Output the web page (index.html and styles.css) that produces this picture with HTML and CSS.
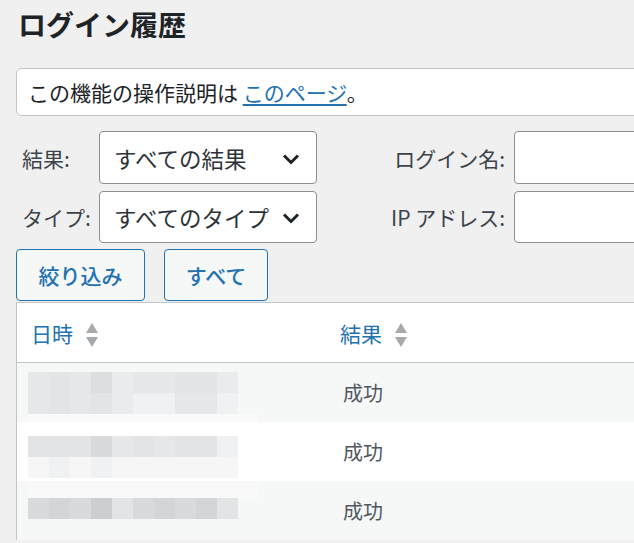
FILE: index.html
```html
<!DOCTYPE html>
<html lang="ja">
<head>
  <meta charset="UTF-8" />
  <title>ログイン履歴</title>
  <link rel="stylesheet" href="styles.css">
</head>
<body>
  <div class="wrap">
    <h1 class="page-title">ログイン履歴</h1>

    <div class="notice">
      この機能の操作説明は <a href="#">このページ</a>。
    </div>

    <form class="filters">
      <label class="lbl">結果:</label>
      <div class="select">
        <span>すべての結果</span>
        <svg class="chev" width="18" height="12" viewBox="0 0 18 12"><path d="M2 2.5l7 7 7-7" fill="none" stroke="#1d2327" stroke-width="3"/></svg>
      </div>
      <label class="lbl right">ログイン名:</label>
      <div class="input"></div>

      <label class="lbl">タイプ:</label>
      <div class="select">
        <span>すべてのタイプ</span>
        <svg class="chev" width="18" height="12" viewBox="0 0 18 12"><path d="M2 2.5l7 7 7-7" fill="none" stroke="#1d2327" stroke-width="3"/></svg>
      </div>
      <label class="lbl right">IP アドレス:</label>
      <div class="input"></div>
    </form>

    <div class="actions">
      <button class="btn">絞り込み</button>
      <button class="btn btn-all">すべて</button>
    </div>

    <table class="log-table">
      <thead>
        <tr>
          <th class="col-date"><a href="#">日時</a><span class="sort"></span></th>
          <th class="col-result"><a href="#">結果</a><span class="sort"></span></th>
        </tr>
      </thead>
      <tbody>
        <tr class="alt">
          <td class="col-date">
            <div class="blur first">
              <div class="blocks">
                <i class="g3"></i><i class="g4"></i><i class="g3"></i><i class="g5"></i><i class="g2"></i><i class="g3"></i><i class="g3"></i><i class="g4"></i><i class="g4"></i><i class="g2"></i>
                <i class="g3"></i><i class="g4"></i><i class="g3"></i><i class="g4"></i><i class="g2"></i><i class="g1"></i><i class="g1"></i><i class="g3"></i><i class="g3"></i><i class="g1"></i>
              </div>
              <div class="strip"></div>
            </div>
          </td>
          <td class="col-result">成功</td>
        </tr>
        <tr>
          <td class="col-date">
            <div class="blur second">
              <div class="blocks">
                <i class="g4"></i><i class="g4"></i><i class="g4"></i><i class="g6"></i><i class="g3"></i><i class="g4"></i><i class="g3"></i><i class="g4"></i><i class="g4"></i><i class="g1"></i>
                <i class="g0"></i><i class="g1"></i><i class="g0"></i><i class="g1"></i><i class="g0"></i><i class="g0"></i><i class="g0"></i><i class="g0"></i><i class="g0"></i><i class="g0"></i>
              </div>
            </div>
          </td>
          <td class="col-result">成功</td>
        </tr>
        <tr class="alt">
          <td class="col-date">
            <div class="blur third">
              <div class="strip tall"></div>
              <div class="blocks">
                <i class="g6"></i><i class="g7"></i><i class="g6"></i><i class="g8"></i><i class="g4"></i><i class="g6"></i><i class="g7"></i><i class="g6"></i><i class="g7"></i><i class="g4"></i>
              </div>
            </div>
          </td>
          <td class="col-result">成功</td>
        </tr>
      </tbody>
    </table>
  </div>
</body>
</html>
```

FILE: styles.css
```css
body {
  margin: 0;
  background: #f0f0f1;
  color: #3c434a;
  font-family: "Noto Sans CJK JP", "Noto Sans", sans-serif;
  font-size: 20px;
  overflow: hidden;
}

.wrap {
  width: 900px;
  padding-left: 16px;
}

.page-title {
  margin: 0;
  padding: 6px 0 0 2px;
  font-size: 28px;
  line-height: 36px;
  font-weight: 700;
  color: #1d2327;
}

.notice {
  margin-top: 26px;
  height: 46px;
  line-height: 46px;
  padding-left: 11px;
  background: #fff;
  border: 1px solid #c3c4c7;
  border-radius: 6px;
  color: #1d2327;
  font-size: 21px;
}

.notice a {
  color: #2271b1;
  text-decoration: underline;
  text-underline-offset: 3px;
}

.filters {
  margin-top: 15px;
  padding-left: 6px;
  display: grid;
  grid-template-columns: 77px 218px 197px 220px;
  grid-template-rows: 53px 52px;
  row-gap: 7px;
}

.lbl {
  display: flex;
  align-items: center;
  color: #3c434a;
  font-size: 21px;
}

.lbl.right {
  justify-content: flex-end;
  padding-right: 9px;
}

.select,
.input {
  background: #fff;
  border: 1px solid #8c8f94;
  border-radius: 4px;
  box-sizing: border-box;
}

.select {
  display: flex;
  align-items: center;
  justify-content: space-between;
  padding: 0 16px 0 14px;
  font-size: 22.5px;
  color: #2c3338;
}

.chev {
  flex-shrink: 0;
  margin-top: 2px;
}

.actions {
  margin-top: 6px;
  display: flex;
  gap: 19px;
}

.btn {
  height: 52px;
  width: 129px;
  background: #f6f7f7;
  border: 1px solid #2271b1;
  border-radius: 4px;
  color: #2271b1;
  font-family: inherit;
  font-size: 21px;
  font-weight: 500;
  padding: 0;
}

.btn-all {
  width: 104px;
}

.log-table {
  margin-top: 1px;
  width: 900px;
  border-collapse: collapse;
  background: #fff;
  border-top: 1px solid #c3c4c7;
  border-left: 1px solid #c3c4c7;
}

.log-table th {
  height: 59px;
  text-align: left;
  font-weight: 400;
  vertical-align: middle;
  border-bottom: 1px solid #c3c4c7;
  padding: 0;
}

.log-table th a {
  color: #2271b1;
  text-decoration: none;
  font-size: 21px;
}

.log-table th.col-date {
  width: 297px;
  padding-left: 14px;
}

.log-table th.col-result {
  padding-left: 12px;
}

.sort {
  display: inline-block;
  width: 13px;
  height: 24px;
  margin-left: 13px;
  vertical-align: -5px;
  position: relative;
}

.sort::before,
.sort::after {
  content: "";
  position: absolute;
  left: 0;
  border-left: 6.5px solid transparent;
  border-right: 6.5px solid transparent;
}

.sort::before {
  top: 0;
  border-bottom: 10px solid #a7aaad;
}

.sort::after {
  bottom: 0;
  border-top: 10px solid #a7aaad;
}

.log-table td {
  height: 59px;
  padding: 0;
  vertical-align: middle;
}

.log-table tr.alt td {
  background: #f6f7f7;
}

.log-table td.col-date {
  padding-left: 11px;
  vertical-align: top;
}

.log-table td.col-result {
  padding-left: 15px;
  color: #50575e;
}

.blur.first { padding-top: 9px; }
.blur.second { padding-top: 14px; }
.blur.third { padding-top: 0; }

.blocks {
  display: grid;
  grid-template-columns: repeat(10, 21px);
  grid-auto-rows: 21px;
}

.blocks i { display: block; }

.strip {
  width: 230px;
  height: 8px;
  background: #fafafa;
}

.strip.tall {
  height: 17px;
  background: #f9f9f9;
}

.g0 { background: #f6f6f6; }
.g1 { background: #f0f1f2; }
.g2 { background: #eaebec; }
.g3 { background: #e6e7e8; }
.g4 { background: #e2e4e5; }
.g5 { background: #dcdee0; }
.g6 { background: #d8dadb; }
.g7 { background: #d3d5d7; }
.g8 { background: #ccced0; }
```
